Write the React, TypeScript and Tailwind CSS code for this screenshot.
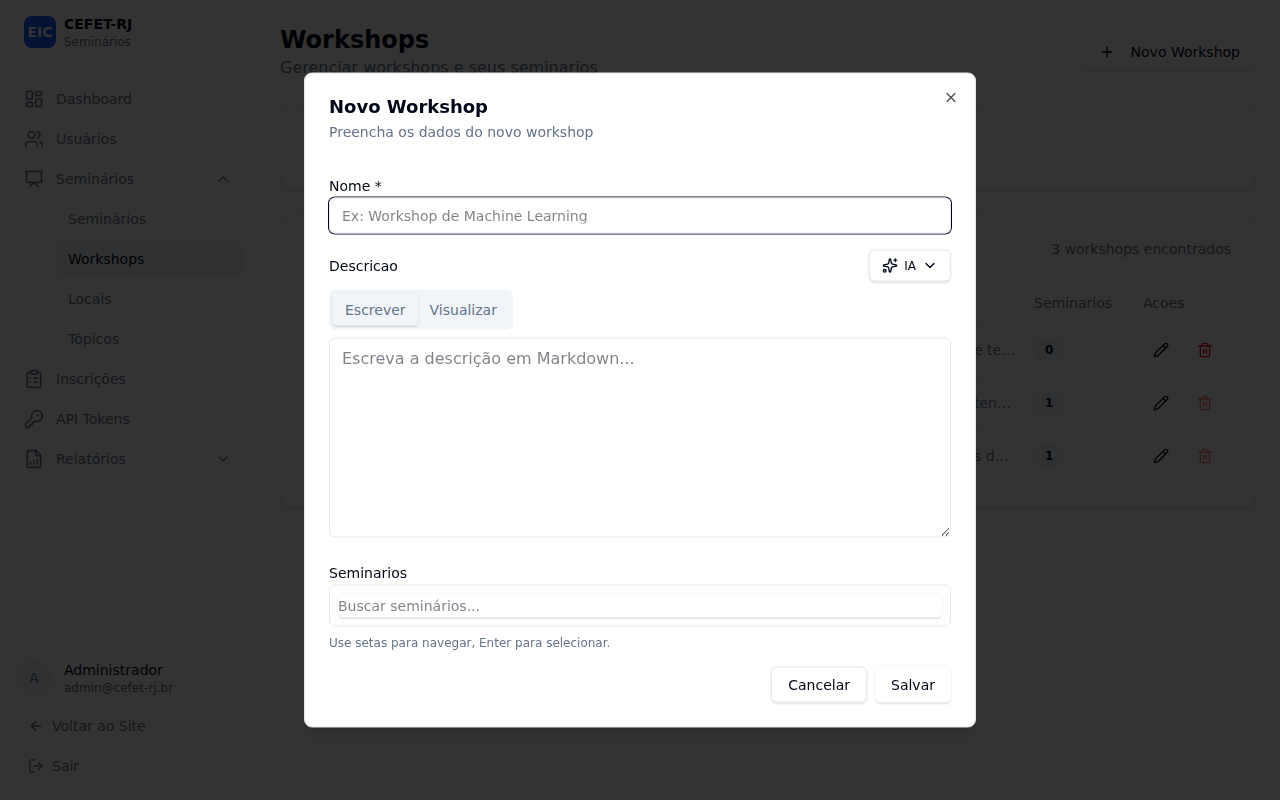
import type { ReactNode } from "react";
import {
  ArrowLeft,
  ChevronDown,
  ChevronUp,
  ClipboardList,
  FileChartColumnIncreasing,
  KeyRound,
  LayoutDashboard,
  LogOut,
  Pencil,
  Plus,
  Presentation,
  Sparkles,
  Trash2,
  Users,
  X,
} from "lucide-react";

const submenu = ["Seminários", "Workshops", "Locais", "Tópicos"];

const workshops = [
  { id: 1, description: "e te…", seminars: 0 },
  { id: 2, description: "ten…", seminars: 1 },
  { id: 3, description: "s d…", seminars: 1 },
];

function NavItem({ icon, children, end }: { icon: ReactNode; children: ReactNode; end?: ReactNode }) {
  return (
    <a href="#" className="flex h-9 items-center gap-3 rounded-lg px-3 text-sm font-medium text-[#64748b]">
      {icon}
      <span className="flex-1">{children}</span>
      {end}
    </a>
  );
}

function Sidebar() {
  return (
    <aside className="flex w-64 shrink-0 flex-col border-r border-slate-200">
      <div className="flex h-16 items-center gap-2 px-6">
        <div className="flex size-8 items-center justify-center rounded-lg bg-blue-600 text-sm font-bold text-white">EIC</div>
        <div className="flex flex-col">
          <span className="text-sm font-bold">CEFET-RJ</span>
          <span className="text-xs text-[#64748b]">Seminários</span>
        </div>
      </div>
      <nav className="flex flex-1 flex-col gap-1 px-3 pt-[17px] pb-4">
        <NavItem icon={<LayoutDashboard size={20} />}>Dashboard</NavItem>
        <NavItem icon={<Users size={20} />}>Usuários</NavItem>
        <NavItem icon={<Presentation size={20} />} end={<ChevronUp size={16} />}>Seminários</NavItem>
        <div className="flex flex-col gap-1 pl-11">
          {submenu.map((item) => (
            <a
              key={item}
              href="#"
              className={
                item === "Workshops"
                  ? "flex h-9 items-center rounded-lg bg-slate-100 px-3 text-sm font-medium text-slate-950"
                  : "flex h-9 items-center rounded-lg px-3 text-sm font-medium text-[#64748b]"
              }
            >
              {item}
            </a>
          ))}
        </div>
        <NavItem icon={<ClipboardList size={20} />}>Inscrições</NavItem>
        <NavItem icon={<KeyRound size={20} />}>API Tokens</NavItem>
        <NavItem icon={<FileChartColumnIncreasing size={20} />} end={<ChevronDown size={16} />}>Relatórios</NavItem>
      </nav>
      <div className="p-4">
        <div className="mb-3 flex items-center gap-3">
          <div className="flex size-9 items-center justify-center rounded-full bg-slate-100 text-sm font-medium text-[#64748b]">A</div>
          <div className="flex flex-col">
            <span className="text-sm font-medium">Administrador</span>
            <span className="text-xs text-[#64748b]">admin@cefet-rj.br</span>
          </div>
        </div>
        <div className="flex flex-col gap-1">
          <a href="#" className="flex h-9 items-center gap-2 px-3 text-sm font-medium text-[#64748b]">
            <ArrowLeft size={16} />
            Voltar ao Site
          </a>
          <button type="button" className="flex h-9 items-center gap-2 px-3 text-sm font-medium text-[#64748b]">
            <LogOut size={16} />
            Sair
          </button>
        </div>
      </div>
    </aside>
  );
}

function WorkshopsTable() {
  return (
    <table className="w-full table-fixed text-sm">
      <thead>
        <tr className="h-10 border-b border-slate-200 text-left text-[#64748b]">
          <th aria-label="Nome" className="px-2 font-medium"></th>
          <th aria-label="Descricao" className="w-15 px-2 font-medium"></th>
          <th className="w-[109px] px-2 font-medium">Seminarios</th>
          <th className="w-24 px-2 font-medium">Acoes</th>
        </tr>
      </thead>
      <tbody>
        {workshops.map((w) => (
          <tr key={w.id} className="border-b border-slate-200 last:border-0">
            <td className="p-2"></td>
            <td className="p-2 whitespace-nowrap text-[#64748b]">{w.description}</td>
            <td className="p-2">
              <span className="inline-flex rounded-md border border-transparent bg-slate-100 px-2.5 py-0.5 text-xs font-semibold">
                {w.seminars}
              </span>
            </td>
            <td className="py-2 pl-2">
              <div className="flex gap-2">
                <button type="button" aria-label="Editar" className="flex size-9 shrink-0 items-center justify-center">
                  <Pencil size={16} />
                </button>
                <button
                  type="button"
                  aria-label="Excluir"
                  disabled={w.seminars > 0}
                  className="flex size-9 shrink-0 items-center justify-center text-red-600 disabled:opacity-50"
                >
                  <Trash2 size={16} />
                </button>
              </div>
            </td>
          </tr>
        ))}
      </tbody>
    </table>
  );
}

function WorkshopDialog() {
  return (
    <div
      role="dialog"
      aria-modal="true"
      aria-labelledby="dialog-title"
      className="fixed top-1/2 left-1/2 flex w-full max-w-2xl -translate-x-1/2 -translate-y-1/2 flex-col gap-4 rounded-lg border border-slate-200 bg-white p-6 shadow-lg"
    >
      <div className="flex flex-col gap-1.5">
        <h2 id="dialog-title" className="text-lg leading-none font-semibold">Novo Workshop</h2>
        <p className="text-sm text-[#64748b]">Preencha os dados do novo workshop</p>
      </div>
      <form className="flex flex-col gap-4 pt-4">
        <div>
          <label htmlFor="nome" className="block text-sm leading-6 font-medium">Nome *</label>
          <input
            id="nome"
            placeholder="Ex: Workshop de Machine Learning"
            className="block h-9 w-full rounded-md border border-slate-200 px-3 text-sm ring-1 ring-slate-950 outline-none"
          />
        </div>
        <div className="flex flex-col gap-2 pb-[7px]">
          <div className="flex items-center justify-between">
            <label htmlFor="descricao" className="text-sm font-medium">Descricao</label>
            <button type="button" className="flex h-8 items-center gap-1.5 rounded-md border border-slate-200 px-3 text-xs font-medium shadow-sm">
              <Sparkles size={16} />
              IA
              <ChevronDown size={16} />
            </button>
          </div>
          <div role="tablist" className="flex h-10 w-fit items-center rounded-md bg-slate-100 p-1 text-sm font-medium text-[#64748b]">
            <button type="button" role="tab" aria-selected="true" className="h-8 rounded-sm px-3 shadow-sm">Escrever</button>
            <button type="button" role="tab" aria-selected="false" className="h-8 rounded-sm px-3">Visualizar</button>
          </div>
          <textarea
            id="descricao"
            placeholder="Escreva a descrição em Markdown..."
            className="block h-50 w-full rounded-md border border-slate-200 px-3 py-2 text-base"
          />
        </div>
        <div>
          <label htmlFor="seminarios" className="block text-sm leading-6 font-medium">Seminarios</label>
          <div className="rounded-md border border-slate-200 p-2">
            <input id="seminarios" placeholder="Buscar seminários..." className="block h-6 w-full rounded-md text-sm shadow-sm" />
          </div>
          <p className="mt-2 text-xs text-[#64748b]">Use setas para navegar, Enter para selecionar.</p>
        </div>
        <div className="flex justify-end gap-2">
          <button type="button" className="h-9 rounded-md border border-slate-200 px-4 text-sm font-medium shadow-sm">Cancelar</button>
          <button type="submit" className="h-9 rounded-md px-4 text-sm font-medium shadow-sm">Salvar</button>
        </div>
      </form>
      <button type="button" aria-label="Fechar" className="absolute top-4 right-4 opacity-70">
        <X size={16} />
      </button>
    </div>
  );
}

export default function App() {
  return (
    <div className="flex min-h-screen bg-white font-['DejaVu_Sans',sans-serif] text-slate-950">
      <Sidebar />
      <main className="flex min-w-0 flex-1 flex-col gap-6 p-6">
        <div className="flex items-center justify-between">
          <div>
            <h1 className="text-2xl font-bold">Workshops</h1>
            <p className="text-[#64748b]">Gerenciar workshops e seus seminarios</p>
          </div>
          <button type="button" className="flex h-9 items-center gap-4 rounded-md px-4 text-sm font-medium shadow-sm">
            <Plus size={16} />
            Novo Workshop
          </button>
        </div>
        <section className="rounded-xl border border-slate-200 p-6 shadow-sm">
          <input aria-label="Buscar" className="block h-9 w-full max-w-sm rounded-md border border-slate-200 px-3 text-sm" />
        </section>
        <section className="flex flex-col gap-6 rounded-xl border border-slate-200 p-6 shadow-sm">
          <p className="text-right text-sm text-[#64748b]">3 workshops encontrados</p>
          <WorkshopsTable />
        </section>
      </main>
      <div className="fixed inset-0 bg-black/80" />
      <WorkshopDialog />
    </div>
  );
}
